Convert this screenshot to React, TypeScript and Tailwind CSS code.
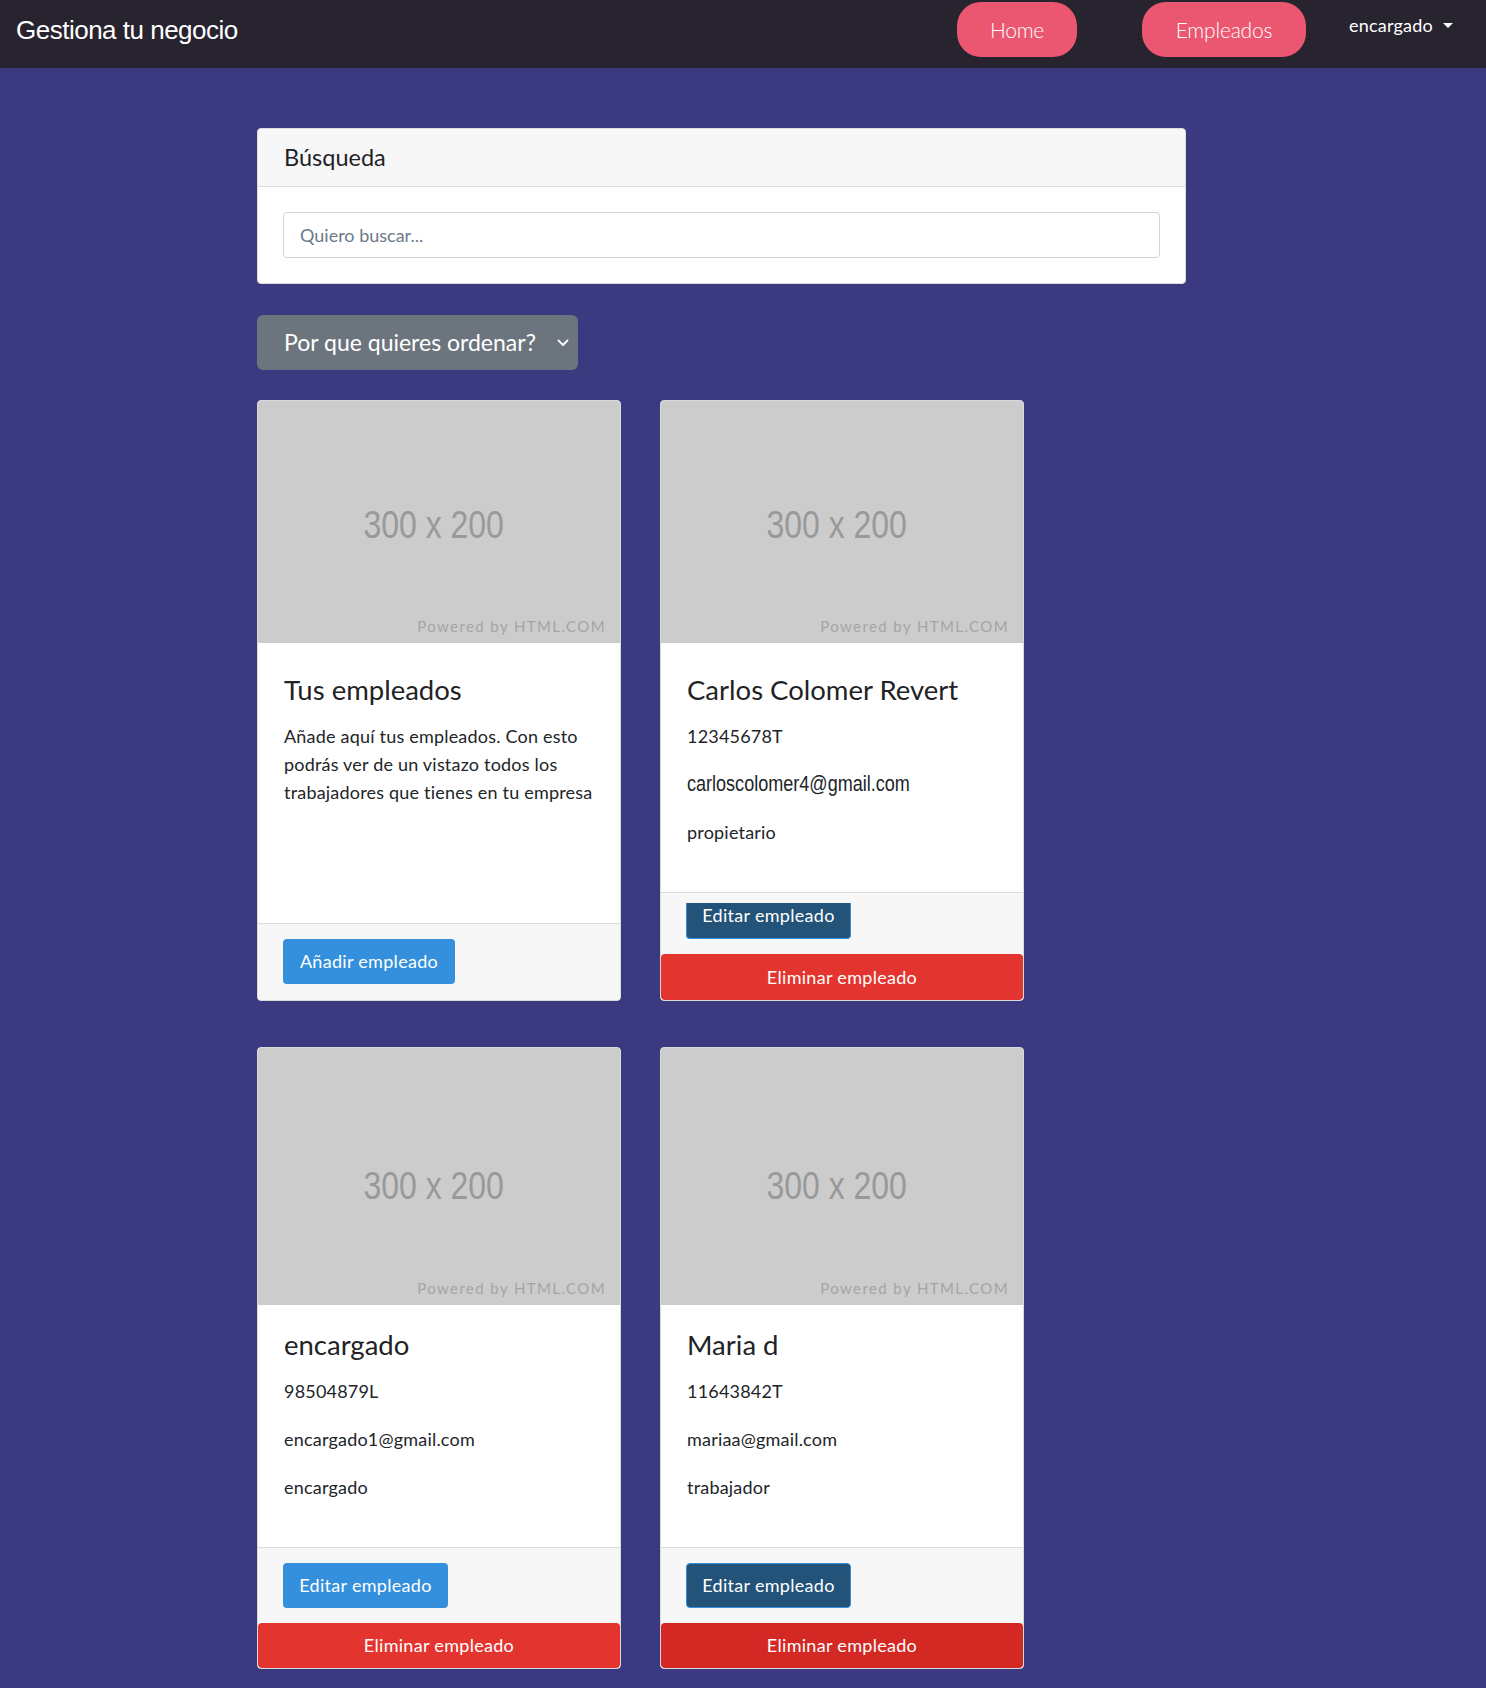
import React from "react";

type Emp = {
  name: string;
  id: string;
  email: string;
  role: string;
  narrowEmail?: boolean;
};

function Placeholder({ h, textTop }: { h: number; textTop: number }) {
  return (
    <div className="relative bg-[#cccccc] shrink-0" style={{ height: h }}>
      <div
        className="absolute left-0 right-0 pr-[10px] flex justify-center"
        style={{ top: textTop }}
      >
        <span className="inline-block scale-x-[0.82] text-[39px] leading-[39px] text-[#999999] font-['Liberation_Sans','Arial',sans-serif]">
          300 x 200
        </span>
      </div>
      <div className="absolute right-[14px] bottom-[7px] text-[15px] leading-[20px] tracking-[1.4px] text-[#a5a5a5] font-['Lato',sans-serif]">
        Powered by HTML.COM
      </div>
    </div>
  );
}

function Card({
  row,
  children,
  footer,
}: {
  row: 1 | 2;
  children: React.ReactNode;
  footer: React.ReactNode;
}) {
  return (
    <div className="flex flex-col bg-white border border-[#d9d9d9] rounded-[4px] overflow-hidden">
      {row === 1 ? (
        <Placeholder h={242} textTop={104} />
      ) : (
        <Placeholder h={257} textTop={118} />
      )}
      <div
        className={
          row === 1
            ? "flex-1 px-[26px] pt-[31px] pb-[26px]"
            : "flex-1 px-[26px] pt-[24px] pb-[26px]"
        }
      >
        {children}
      </div>
      <div className="bg-[#f7f7f7] border-t border-[#dcdcdc]">{footer}</div>
    </div>
  );
}

function EmpBody({ e }: { e: Emp }) {
  return (
    <>
      <h5 className="text-[27.5px] leading-[32px] mb-[16px] text-[#1f2326]">
        {e.name}
      </h5>
      <p className="text-[18px] leading-[28px] mb-[20px] tracking-[0.2px]">
        {e.id}
      </p>
      {e.narrowEmail ? (
        <p className="mb-[20px] h-[28px]">
          <span className="inline-block origin-left scale-x-[0.82] text-[22px] leading-[28px] font-['Liberation_Sans','Arial',sans-serif] whitespace-nowrap">
            {e.email}
          </span>
        </p>
      ) : (
        <p className="text-[18px] leading-[28px] mb-[20px] tracking-[0.2px]">
          {e.email}
        </p>
      )}
      <p className="text-[18px] leading-[28px] mb-[20px] tracking-[0.2px]">
        {e.role}
      </p>
    </>
  );
}

export default function App() {
  return (
    <div className="min-h-screen bg-[#3b3a80] font-['Lato',sans-serif] text-[#212529] pb-[20px]">
      <nav className="h-[68px] bg-[#27232f] flex items-start">
        <div className="ml-[16px] mt-[14px] text-white text-[26px] leading-[32px] tracking-[-0.5px] font-['Liberation_Sans','Arial',sans-serif]">
          Gestiona tu negocio
        </div>
        <div className="ml-auto mr-[33px] pt-[2px] flex items-start">
          <button className="h-[55px] w-[120px] rounded-[24px] bg-[#eb5770] text-white text-[21px] tracking-[-0.3px] font-light flex items-center justify-center">
            Home
          </button>
          <button className="ml-[65px] h-[55px] w-[164px] rounded-[24px] bg-[#eb5770] text-white text-[21px] tracking-[-0.2px] font-light flex items-center justify-center">
            Empleados
          </button>
          <div className="ml-[43px] mt-[11px] flex items-center text-white text-[18px] leading-[24px]">
            <span className="w-[84px] whitespace-nowrap tracking-[0.2px]">
              encargado
            </span>
            <span className="ml-[10px] w-0 h-0 border-t-[5px] border-t-white border-x-[5px] border-x-transparent" />
          </div>
        </div>
      </nav>

      <main className="pl-[257px] pt-[60px]">
        <div className="w-[929px]">
          <div className="bg-white border border-[#dcdcdc] rounded-[4px] overflow-hidden">
            <div className="h-[58px] bg-[#f7f7f7] border-b border-[#dcdcdc] px-[26px] flex items-center text-[23.5px] text-[#1f2326]">
              Búsqueda
            </div>
            <div className="px-[25px] pt-[25px] pb-[25px]">
              <input
                className="block w-full h-[46px] border border-[#ced4da] rounded-[4px] px-[16px] text-[18px] placeholder:text-[#6c7a89] outline-none"
                placeholder="Quiero buscar..."
              />
            </div>
          </div>

          <button className="mt-[31px] w-[321px] h-[55px] rounded-[6px] bg-[#6c757d] text-white text-[23px] flex items-center pl-[27px] pr-[9px] justify-between">
            <span>Por que quieres ordenar?</span>
            <svg width="12" height="8" viewBox="0 0 12 8" fill="none">
              <path
                d="M1.5 1.5 L6 6 L10.5 1.5"
                stroke="white"
                strokeWidth="1.8"
                strokeLinecap="round"
                strokeLinejoin="round"
              />
            </svg>
          </button>

          <div className="mt-[30px] grid grid-cols-[364px_364px] gap-x-[39px] gap-y-[46px]">
            <Card
              row={1}
              footer={
                <div className="px-[25px] pt-[15px] pb-[16px]">
                  <button className="h-[45px] w-[172px] rounded-[4px] bg-[#3490dc] text-white text-[18px] tracking-[0.3px]">
                    Añadir empleado
                  </button>
                </div>
              }
            >
              <h5 className="text-[27.5px] leading-[32px] mb-[16px] text-[#1f2326]">
                Tus empleados
              </h5>
              <p className="text-[18px] leading-[28px] tracking-[0.2px]">
                Añade aquí tus empleados. Con esto podrás ver de un vistazo
                todos los trabajadores que tienes en tu empresa
              </p>
            </Card>

            <Card
              row={1}
              footer={
                <div className="pt-[10px]">
                  <div className="px-[25px]">
                    <button className="h-[36px] w-[165px] rounded-b-[4px] border-x border-b border-[#3490dc] bg-[#235378] text-white text-[18px] tracking-[0.3px] leading-[24px] flex items-start justify-center">
                      Editar empleado
                    </button>
                  </div>
                  <button className="mt-[15px] h-[46px] w-full rounded-[4px] bg-[#e3342f] text-white text-[18px] tracking-[0.3px]">
                    Eliminar empleado
                  </button>
                </div>
              }
            >
              <EmpBody
                e={{
                  name: "Carlos Colomer Revert",
                  id: "12345678T",
                  email: "carloscolomer4@gmail.com",
                  role: "propietario",
                  narrowEmail: true,
                }}
              />
            </Card>

            <Card
              row={2}
              footer={
                <div className="pt-[15px]">
                  <div className="px-[25px]">
                    <button className="h-[45px] w-[165px] rounded-[4px] bg-[#3490dc] text-white text-[18px] tracking-[0.3px]">
                      Editar empleado
                    </button>
                  </div>
                  <button className="mt-[15px] h-[45px] w-full rounded-[4px] bg-[#e3342f] text-white text-[18px] tracking-[0.3px]">
                    Eliminar empleado
                  </button>
                </div>
              }
            >
              <EmpBody
                e={{
                  name: "encargado",
                  id: "98504879L",
                  email: "encargado1@gmail.com",
                  role: "encargado",
                }}
              />
            </Card>

            <Card
              row={2}
              footer={
                <div className="pt-[15px]">
                  <div className="px-[25px]">
                    <button className="h-[45px] w-[165px] rounded-[4px] border border-[#3490dc] bg-[#235378] text-white text-[18px] tracking-[0.3px]">
                      Editar empleado
                    </button>
                  </div>
                  <button className="mt-[15px] h-[45px] w-full rounded-[4px] bg-[#d42824] text-white text-[18px] tracking-[0.3px]">
                    Eliminar empleado
                  </button>
                </div>
              }
            >
              <EmpBody
                e={{
                  name: "Maria d",
                  id: "11643842T",
                  email: "mariaa@gmail.com",
                  role: "trabajador",
                }}
              />
            </Card>
          </div>
        </div>
      </main>
    </div>
  );
}
